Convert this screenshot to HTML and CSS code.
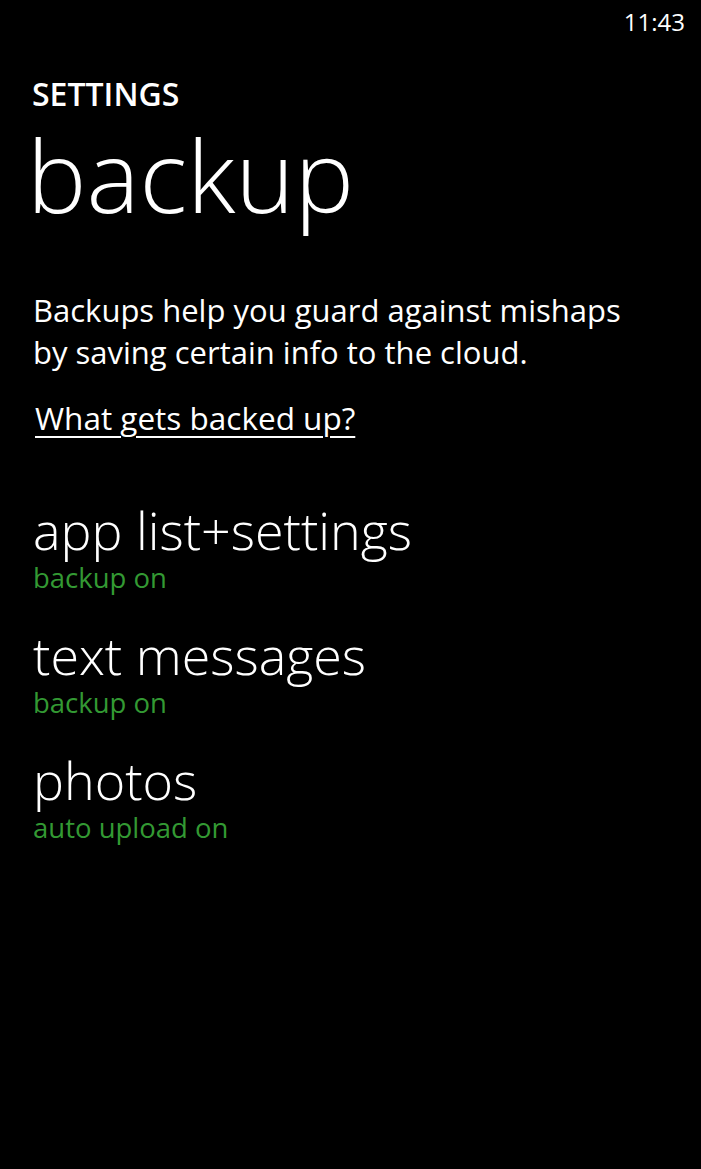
FILE: index.html
```html
<!DOCTYPE html>
<html>
<head>
<meta charset="utf-8">
<link rel="stylesheet" href="styles.css">
</head>
<body>
<div class="status"><span class="time">11:43</span></div>
<header class="header">
  <div class="app-title">SETTINGS</div>
  <h1 class="page-title">backup</h1>
</header>
<main class="content">
  <p class="intro">Backups help you guard against mishaps<br>by saving certain info to the cloud.</p>
  <a class="link" href="#">What gets backed up?</a>
  <ul class="list">
    <li class="item"><div class="item-title">app list+settings</div><div class="item-sub">backup on</div></li>
    <li class="item"><div class="item-title">text messages</div><div class="item-sub">backup on</div></li>
    <li class="item"><div class="item-title">photos</div><div class="item-sub">auto upload on</div></li>
  </ul>
</main>
</body>
</html>
```
FILE: styles.css
```css
html, body {
  margin: 0;
  padding: 0;
  background: #000;
  color: #fff;
  font-family: "Open Sans", "Noto Sans", sans-serif;
  height: 100%;
}
.status {
  height: 44px;
  display: flex;
  justify-content: flex-end;
  align-items: center;
  padding-right: 16px;
}
.time {
  font-size: 24px;
  line-height: 44px;
}
.header {
  padding-left: 32px;
  padding-top: 30px;
}
.app-title {
  font-size: 32px;
  font-weight: 600;
  line-height: 40px;
}
.page-title {
  margin: 0;
  margin-left: -5px;
  font-size: 100px;
  font-weight: 300;
  line-height: 120px;
}
.content {
  padding-left: 33px;
  padding-top: 55px;
}
.intro {
  margin: 0;
  font-size: 31px;
  line-height: 42px;
}
.link {
  display: inline-block;
  margin-top: 25px;
  margin-left: 2px;
  color: #fff;
  font-size: 31.5px;
  line-height: 40px;
  text-decoration: underline;
  text-underline-offset: 6px;
  text-decoration-thickness: 2px;
}
.list {
  list-style: none;
  margin: 64px 0 0;
  padding: 0;
  display: flex;
  flex-direction: column;
  gap: 32px;
}
.item-title {
  font-size: 52px;
  font-weight: 300;
  line-height: 56px;
}
.item-sub {
  margin-top: 3px;
  font-size: 27.5px;
  line-height: 34px;
  color: #339933;
}
```
